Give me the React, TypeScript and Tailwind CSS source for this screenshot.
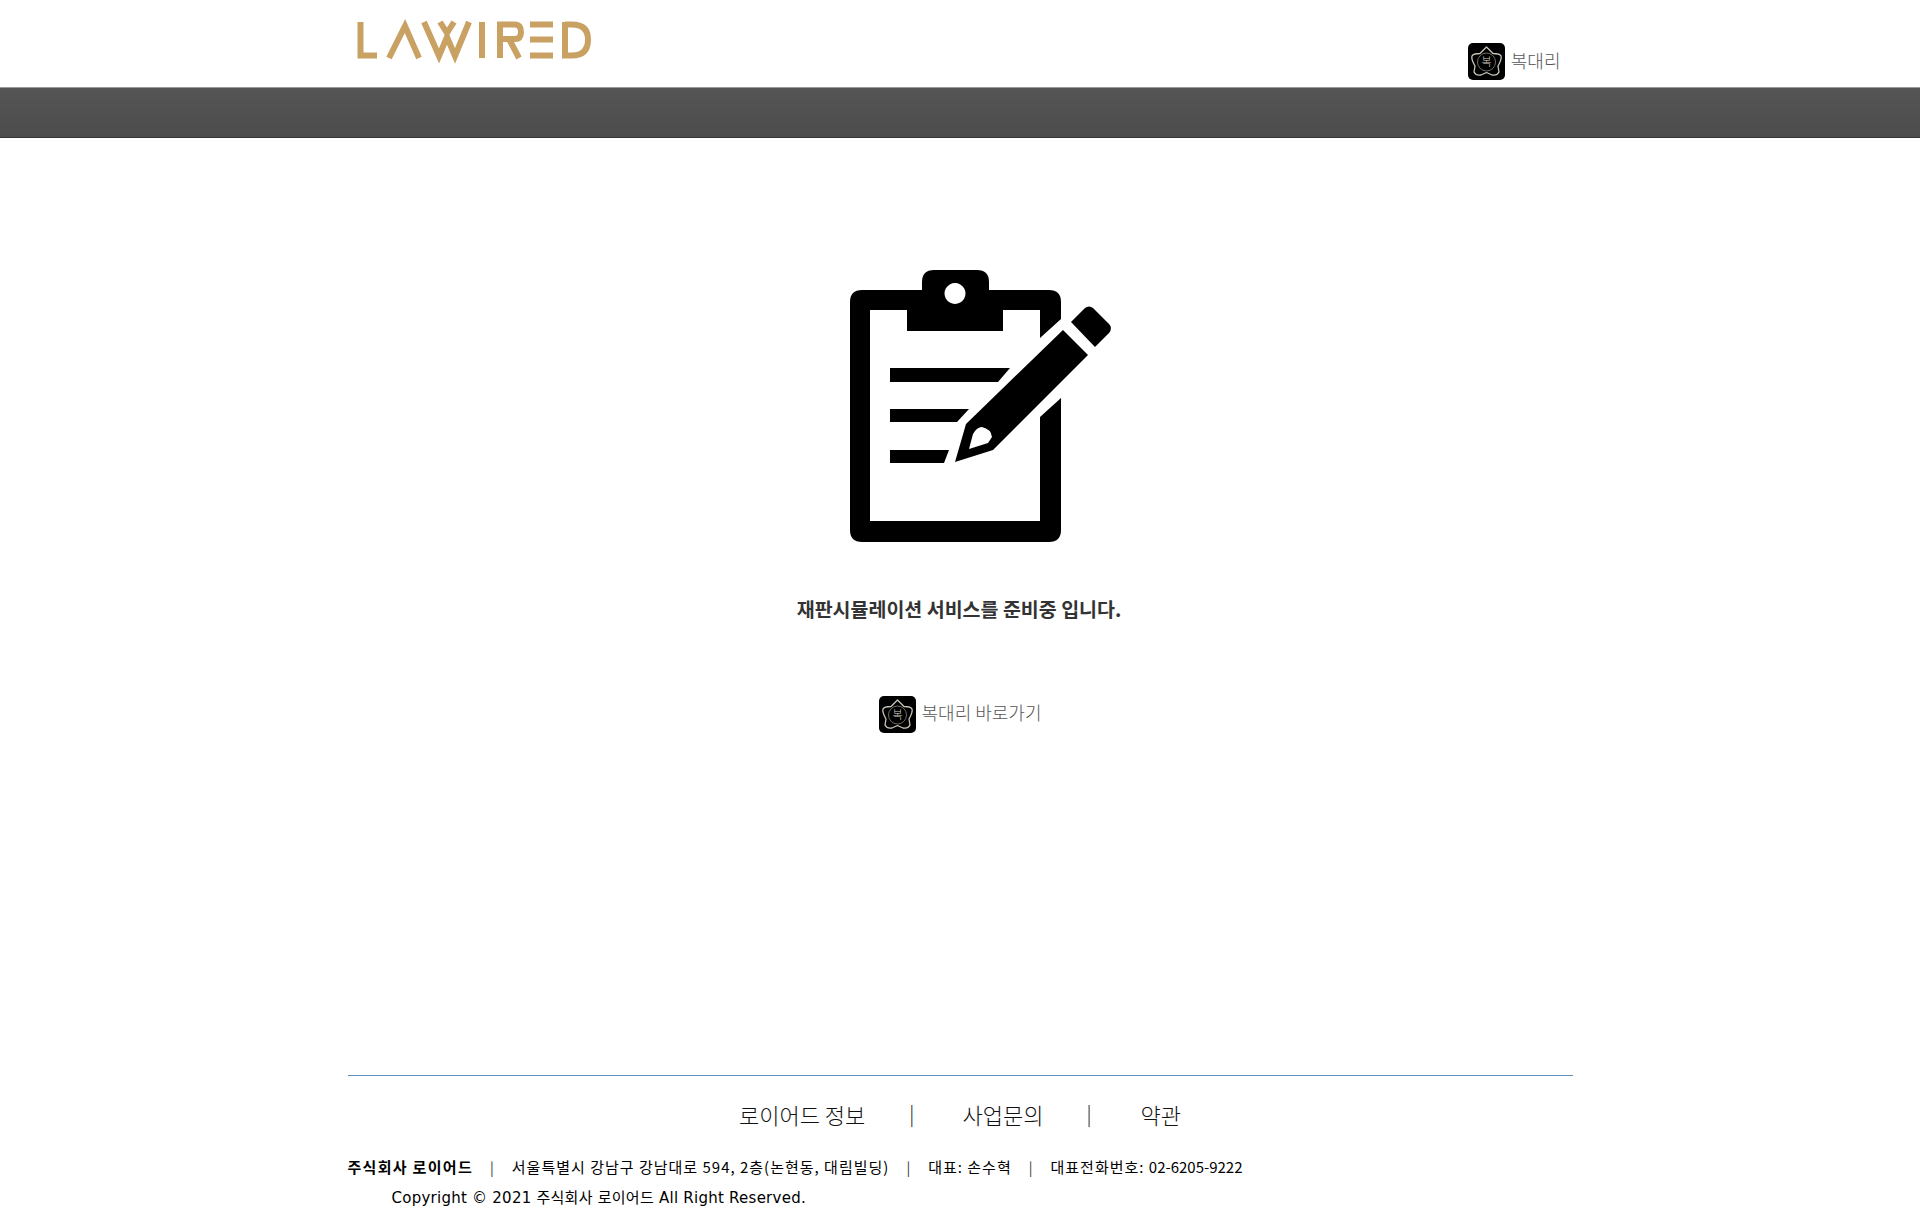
const KR = "font-['Noto_Sans_CJK_KR',sans-serif]";

const Emblem = () => (
  <svg viewBox="0 0 37 37" className="w-[37px] h-[37px] shrink-0 block">
    <rect width="37" height="37" rx="5" fill="#000" />
    <path
      d="M18.5 4 L25 10.5 Q32 10.5 33 13 Q34 16 30 23 L31 29 Q29 33 24 32 L18.5 29.5 L13 32 Q8 33 6 29 L7 23 Q3 16 4 13 Q5 10.5 12 10.5Z"
      fill="none"
      stroke="#c9c5b8"
      strokeWidth="1.3"
      strokeLinejoin="round"
    />
    <circle cx="18.5" cy="19" r="9" fill="#000" stroke="#6f6c64" strokeWidth="1" />
    <text x="18.5" y="23" textAnchor="middle" fontSize="11" fill="#d8d4c8" fontFamily="'Noto Sans CJK KR', sans-serif">
      복
    </text>
  </svg>
);

const Logo = () => (
  <svg viewBox="0 0 260 72" className="w-[260px] h-[72px] block" fill="none" stroke="#c9a263" strokeWidth="6">
    {/* wordmark, coordinates measured from the reference */}
    <path d="M12.5 22 V55.5 H29" />
    <path d="M41 58 L57 26 L71 58" />
    <path d="M76 22 L91 56 L99 37 L107 56 L121 22" />
    <path d="M92 22 L99 33 L106 22" />
    <path d="M134 22 V58" />
    <path d="M152 58 V24.5 H167 Q173 24.5 173 32 Q173 39 167 39 H153 M161 39 L171 58" />
    <path d="M182 24.5 H205 M182 39.5 H205 M182 55.5 H205" />
    <path d="M217 22 V55.5 H224 Q240 55.5 240 39.5 Q240 24.5 224 24.5 H217" />
  </svg>
);

const Clipboard = () => (
  <svg viewBox="0 0 300 300" className="w-[300px] h-[300px] block ml-[40px]">
    <path
      fillRule="evenodd"
      d="M32 40 H92 V32 Q92 20 104 20 H147 Q159 20 159 32 V40 H219 Q231 40 231 52 V69 L210 88 V60 H173 V81 H77 V60 H40 V271 H210 V167 L231 148 V280 Q231 292 219 292 H32 Q20 292 20 280 V52 Q20 40 32 40Z M125 33 a10.5 10.5 0 1 0 0.01 0Z"
    />
    <path d="M60 118 H180 L168 132 H60Z M60 159 H139 L127 172 H60Z M60 200 H119 L114 213 H60Z" />
    <path
      fillRule="evenodd"
      d="M233 80 L258 105 L163 200 L125 212 L136 174Z M139 199 L143 184 Q147 177 152 177 Q161 179 162 187 L158 193Z"
    />
    <path d="M241 72 L255 58 Q259 55 263 58 L279 74 Q283 78 279 83 L265 97Z" />
  </svg>
);

const Sep = () => <span className="text-[14px] text-[#333]">|</span>;

export default function App() {
  return (
    <div className={`min-h-[1211px] bg-white ${KR}`}>
      <header className="h-[87px] flex justify-center">
        <div className="w-[1225px] flex items-start justify-between">
          <Logo />
          <a className="flex items-center gap-[6px] mt-[43px] mr-[12px] text-[18px] leading-[34px] font-light text-[#555]">
            <Emblem />
            <span className="mb-[3px]">복대리</span>
          </a>
        </div>
      </header>
      <div className="h-[51px] bg-linear-to-b from-[#555555] to-[#4c4c4c] border-t border-t-[#999] border-b border-b-[#333]" />

      <main className="flex flex-col items-center">
        <div className="mt-[112px]">
          <Clipboard />
        </div>
        <p className="mt-[44px] text-[19.5px] leading-[30px] font-bold text-[#333] ml-[-2px]">
          재판시뮬레이션 서비스를 준비중 입니다.
        </p>
        <a className="mt-[71px] flex items-center gap-[6px] text-[18px] leading-[34px] font-light text-[#555]">
          <Emblem />
          <span className="mb-[4px]">복대리 바로가기</span>
        </a>
      </main>

      <footer className="mt-[342px] mx-auto w-[1225px] border-t border-t-[#5f8fbd] text-black">
        <nav className="mt-[23px] flex items-center justify-center text-[22px] leading-[30px] font-light text-[#111] gap-[46px]">
          <span>로이어드 정보</span>
          <span className="text-[20px] -ml-[2px] mr-[2px]">|</span>
          <span>사업문의</span>
          <span className="text-[20px] -ml-[3px] mr-[3px]">|</span>
          <span>약관</span>
        </nav>
        <div className="mt-[28px] flex items-center gap-[17px] text-[15px] leading-[20px] tracking-[1px] font-['Noto_Sans_CJK_KR','DejaVu_Sans',sans-serif]">
          <b className="font-bold tracking-[1.3px]">주식회사 로이어드</b>
          <Sep />
          <span>서울특별시 강남구 강남대로 594, 2층(논현동, 대림빌딩)</span>
          <Sep />
          <span>대표: 손수혁</span>
          <Sep />
          <span>
            대표전화번호: <span className="tracking-normal">02-6205-9222</span>
          </span>
        </div>
        <p className="mt-[11px] ml-[44px] text-[15px] leading-[20px] tracking-[0.25px] font-['DejaVu_Sans','Noto_Sans_CJK_KR',sans-serif]">
          Copyright © 2021 주식회사 로이어드 All Right Reserved.
        </p>
      </footer>
    </div>
  );
}
